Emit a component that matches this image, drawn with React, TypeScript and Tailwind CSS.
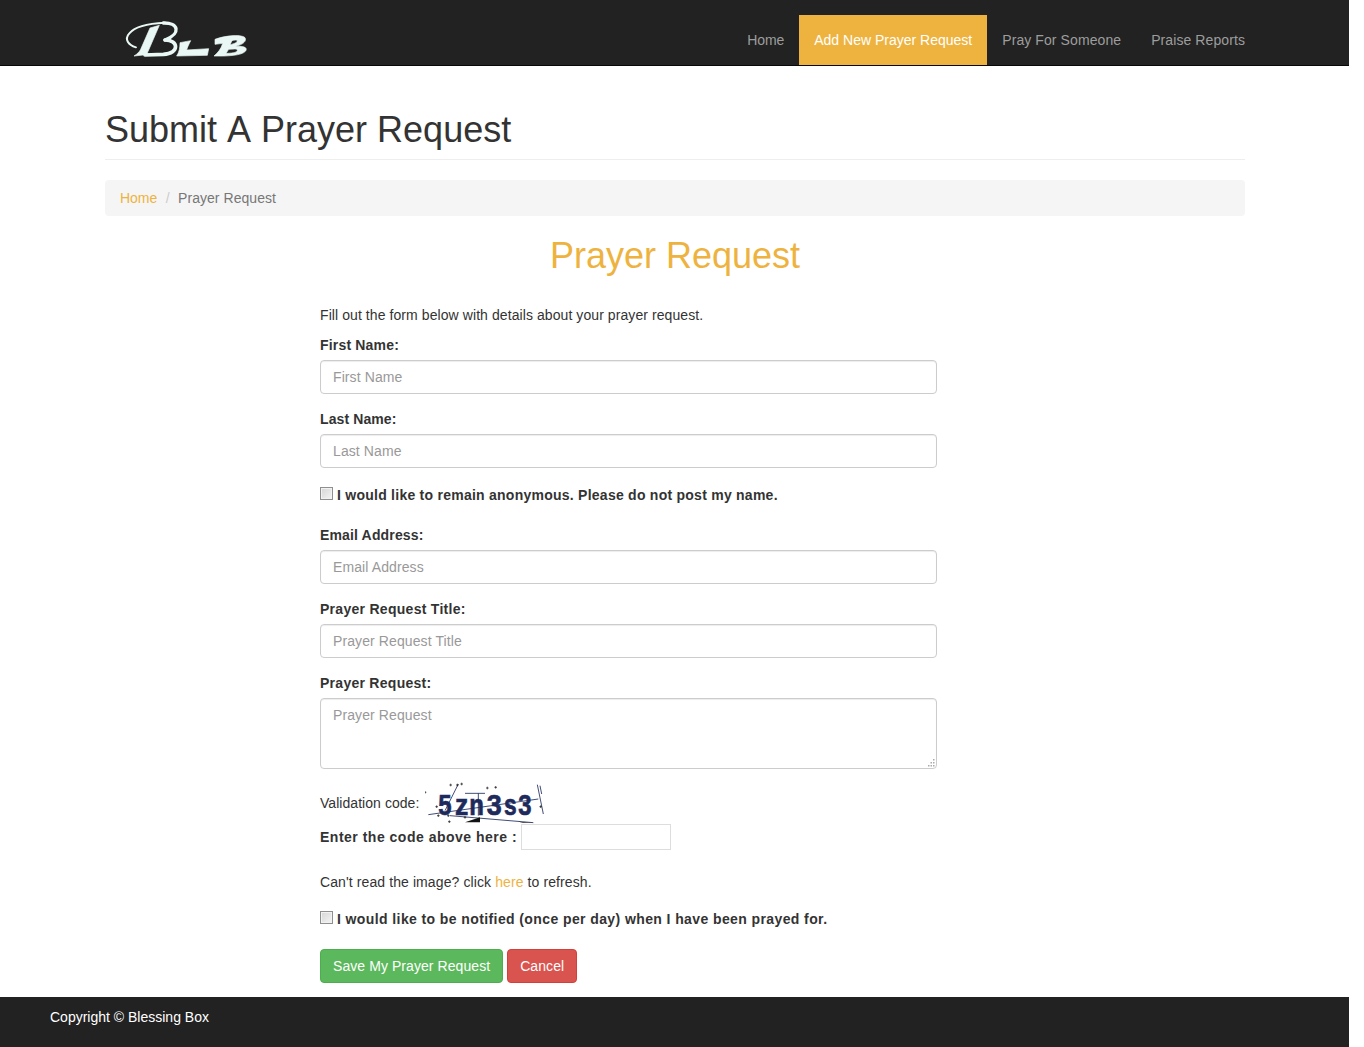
const inputClass =
  'block w-full h-[34px] rounded border border-[#ccc] bg-white px-3 text-sm tracking-[0.1px] text-[#555] placeholder:text-[#999] shadow-[inset_0_1px_1px_rgba(0,0,0,0.075)]';

const checkClass =
  'mr-1 mb-[3px] size-[13px] shrink-0 appearance-none border border-[#8e8f8f] bg-[linear-gradient(135deg,#d6d6d6,#f4f4f4)] shadow-[inset_0_0_0_1px_#f2f2f2]';

const Field = ({ label, placeholder, track }: { label: string; placeholder: string; track: string }) => (
  <div className="mb-[15px]">
    <label className={`mb-[5px] block h-5 text-sm font-bold leading-5 ${track}`}>{label}</label>
    <input className={inputClass} placeholder={placeholder} />
  </div>
);

const Logo = () => (
  <svg width="130" height="40" viewBox="60 60 390 120" className="ml-[15px] mt-5 shrink-0">
    <g fill="none" stroke="#eaf8f5" strokeLinecap="round">
      <path d="M108 142 C85 135 72 118 88 100 C105 78 150 70 195 68" strokeWidth="6" />
      <path d="M190 69 C236 68 244 100 195 120" strokeWidth="10" />
      <path d="M195 120 C236 120 240 160 190 163 L135 165" strokeWidth="11" />
    </g>
    <g fill="#eaf8f5" stroke="#eaf8f5" strokeWidth="2">
      <path d="M150 84 L178 76 L146 150 C142 158 140 162 150 163 L102 168 C112 162 118 156 122 148 Z" />
      <path d="M240 128 L272 122 C266 134 262 142 260 150 L326 146 L322 166 L230 168 C238 156 240 142 240 128 Z" />
      <path d="M345 118 C370 108 420 102 434 112 C442 122 430 134 406 139 C430 138 444 142 437 153 C426 167 380 169 342 168 C354 158 364 146 368 130 L345 133 Z M396 122 L390 134 C404 131 412 127 412 122 C410 119 402 120 396 122 Z M404 147 L386 148 L378 160 C394 160 410 158 412 152 C412 148 410 147 404 147 Z" fillRule="evenodd" />
    </g>
  </svg>
);

const captchaGlyphs = [
  { ch: '5', x: 85, w: 40 },
  { ch: 'z', x: 135, w: 40 },
  { ch: 'n', x: 178, w: 44 },
  { ch: '3', x: 230, w: 45 },
  { ch: 's', x: 282, w: 38 },
  { ch: '3', x: 325, w: 40 },
];

// drawn in the coordinates of a 3x crop of the captcha
const Captcha = () => (
  <svg width="120" height="42" viewBox="45 24 360 126" className="ml-[6px] shrink-0">
    <g fontFamily="'Liberation Sans', sans-serif" fontSize="90" fontWeight="700" fill="#1d2a5b" stroke="#1d2a5b" strokeWidth="2">
      {captchaGlyphs.map((g, i) => (
        <text key={i} x={g.x} y="122" textLength={g.w} lengthAdjust="spacingAndGlyphs">
          {g.ch}
        </text>
      ))}
    </g>
    <g stroke="#1d2a5b" strokeWidth="2.5" fill="none">
      <path d="M55 122 L385 75" />
      <path d="M120 125 L370 146" />
      <path d="M145 30 L105 110" />
      <path d="M165 58 L225 58 M205 58 L205 125" />
      <path d="M382 32 L400 120 M390 35 L395 60" />
    </g>
    <path d="M165 145 L210 130 L210 145 Z M325 143 L368 146 L340 146 Z" fill="#111" />
    <g stroke="#111" strokeWidth="2" fill="none">
      <path d="M41 55h8M45 51v8M118 33h8M122 29v8M138 33h8M142 29v8M151 30h8M155 26v8" />
      <path d="M228 42h8M232 38v8M253 40h8M257 36v8M76 98h8M80 94v8M81 125h8M85 121v8" />
      <path d="M111 125h8M115 121v8M114 143h8M118 139v8M161 130h8M165 126v8M388 98h8M392 94v8" />
    </g>
  </svg>
);

export default function App() {
  return (
    <div className="flex min-h-[1047px] w-[1349px] flex-col bg-white font-['Liberation_Sans',Arial,sans-serif] text-sm leading-5 text-[#333]">
      {/* Navbar */}
      <nav className="h-[66px] border-b border-[#080808] bg-[#222]">
        <div className="ml-[90px] flex h-[65px] w-[1170px] justify-between px-[15px]">
          <Logo />
          <ul className="flex pt-[15px] text-[#9d9d9d]">
            <li className="flex h-[50px] items-center px-[15px] tracking-[-0.1px]">Home</li>
            <li className="flex h-[50px] items-center bg-[#eeb33f] px-[15px] text-white">Add New Prayer Request</li>
            <li className="flex h-[50px] items-center px-[15px] tracking-[0.09px]">Pray For Someone</li>
            <li className="flex h-[50px] items-center pl-[15px] tracking-[0.09px]">Praise Reports</li>
          </ul>
        </div>
      </nav>

      {/* Page body */}
      <main className="ml-[90px] w-[1170px] flex-1 px-[15px]">
        <h1 className="mt-11 mb-5 border-b border-[#eee] pb-[9px] text-4xl leading-[40px] font-normal [font-kerning:none]">
          Submit A Prayer Request
        </h1>
        <ol className="flex h-9 items-center rounded bg-[#f5f5f5] px-[15px]">
          <li className="tracking-[-0.05px] text-[#eeb33f]">Home</li>
          <li className="px-[8.5px] text-[#ccc]">/</li>
          <li className="tracking-[0.05px] text-[#777]">Prayer Request</li>
        </ol>
        <h2 className="mt-5 mb-[29px] text-center text-4xl leading-[40px] font-normal text-[#eeb33f]">
          Prayer Request
        </h2>

        <form className="ml-[215px] w-[617px]">
          <p className="mb-[10px] tracking-[0.08px]">Fill out the form below with details about your prayer request.</p>
          <Field label="First Name:" placeholder="First Name" track="tracking-[0.18px]" />
          <Field label="Last Name:" placeholder="Last Name" track="tracking-[0.1px]" />
          <label className="mb-5 flex h-[22px] items-center pt-[2px] font-bold tracking-[0.25px]">
            <input type="checkbox" className={checkClass} />I would like to remain anonymous. Please do not post my name.
          </label>
          <Field label="Email Address:" placeholder="Email Address" track="tracking-[0.15px]" />
          <Field label="Prayer Request Title:" placeholder="Prayer Request Title" track="tracking-[0.28px]" />
          <div className="mb-[14px]">
            <label className="mb-[5px] block h-5 font-bold tracking-[0.27px]">Prayer Request:</label>
            <div className="relative">
              <textarea
                className="block h-[71px] w-full resize-none rounded border border-[#ccc] bg-white px-3 py-[6px] text-sm tracking-[0.1px] text-[#555] placeholder:text-[#999] shadow-[inset_0_1px_1px_rgba(0,0,0,0.075)]"
                placeholder="Prayer Request"
              />
              <svg width="8" height="8" viewBox="0 0 8 8" fill="#aaa" className="absolute right-[2px] bottom-[2px]">
                <rect x="6" y="0" width="1.5" height="1.5" />
                <rect x="3.5" y="3" width="1.5" height="1.5" />
                <rect x="6" y="3" width="1.5" height="1.5" />
                <rect x="1" y="6" width="1.5" height="1.5" />
                <rect x="3.5" y="6" width="1.5" height="1.5" />
                <rect x="6" y="6" width="1.5" height="1.5" />
              </svg>
            </div>
          </div>
          <div className="flex h-10 items-center tracking-[0.05px]">
            Validation code:
            <Captcha />
          </div>
          <div className="mt-[1px] flex h-[26px] items-center font-bold tracking-[0.5px]">
            Enter the code above here :
            <input className="ml-1 h-[26px] w-[150px] border border-[#ddd] bg-white" />
          </div>
          <p className="mt-[22px] mb-[17px] tracking-[0.1px]">
            Can't read the image? click <span className="text-[#eeb33f]">here</span> to refresh.
          </p>
          <label className="flex h-5 items-center font-bold tracking-[0.4px]">
            <input type="checkbox" className={checkClass} />I would like to be notified (once per day) when I have been prayed for.
          </label>
          <div className="mt-5 mb-[14px] flex gap-1">
            <button type="button" className="h-[34px] rounded border border-[#4cae4c] bg-[#5cb85c] px-3 tracking-[0.07px] text-white">
              Save My Prayer Request
            </button>
            <button type="button" className="h-[34px] rounded border border-[#d43f3a] bg-[#d9534f] px-3 tracking-[0.07px] text-white">
              Cancel
            </button>
          </div>
        </form>
      </main>

      {/* Footer */}
      <footer className="h-[50px] bg-[#222] px-[50px] pt-[10px] text-white">Copyright © Blessing Box</footer>
    </div>
  );
}
